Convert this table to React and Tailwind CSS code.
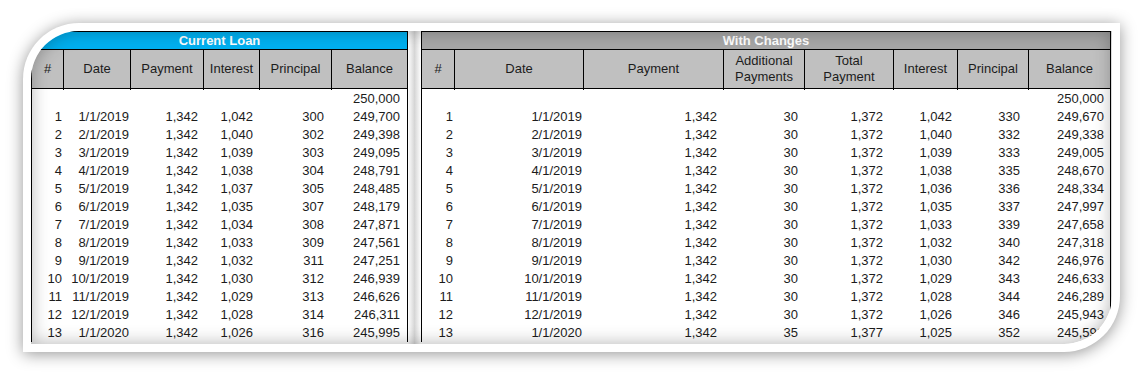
const current = [
  ['1', '1/1/2019', '1,342', '1,042', '300', '249,700'],
  ['2', '2/1/2019', '1,342', '1,040', '302', '249,398'],
  ['3', '3/1/2019', '1,342', '1,039', '303', '249,095'],
  ['4', '4/1/2019', '1,342', '1,038', '304', '248,791'],
  ['5', '5/1/2019', '1,342', '1,037', '305', '248,485'],
  ['6', '6/1/2019', '1,342', '1,035', '307', '248,179'],
  ['7', '7/1/2019', '1,342', '1,034', '308', '247,871'],
  ['8', '8/1/2019', '1,342', '1,033', '309', '247,561'],
  ['9', '9/1/2019', '1,342', '1,032', '311', '247,251'],
  ['10', '10/1/2019', '1,342', '1,030', '312', '246,939'],
  ['11', '11/1/2019', '1,342', '1,029', '313', '246,626'],
  ['12', '12/1/2019', '1,342', '1,028', '314', '246,311'],
  ['13', '1/1/2020', '1,342', '1,026', '316', '245,995'],
];

const changed = [
  ['1', '1/1/2019', '1,342', '30', '1,372', '1,042', '330', '249,670'],
  ['2', '2/1/2019', '1,342', '30', '1,372', '1,040', '332', '249,338'],
  ['3', '3/1/2019', '1,342', '30', '1,372', '1,039', '333', '249,005'],
  ['4', '4/1/2019', '1,342', '30', '1,372', '1,038', '335', '248,670'],
  ['5', '5/1/2019', '1,342', '30', '1,372', '1,036', '336', '248,334'],
  ['6', '6/1/2019', '1,342', '30', '1,372', '1,035', '337', '247,997'],
  ['7', '7/1/2019', '1,342', '30', '1,372', '1,033', '339', '247,658'],
  ['8', '8/1/2019', '1,342', '30', '1,372', '1,032', '340', '247,318'],
  ['9', '9/1/2019', '1,342', '30', '1,372', '1,030', '342', '246,976'],
  ['10', '10/1/2019', '1,342', '30', '1,372', '1,029', '343', '246,633'],
  ['11', '11/1/2019', '1,342', '30', '1,372', '1,028', '344', '246,289'],
  ['12', '12/1/2019', '1,342', '30', '1,372', '1,026', '346', '245,943'],
  ['13', '1/1/2020', '1,342', '35', '1,377', '1,025', '352', '245,591'],
];

// right padding of each column so numbers sit like the sheet's formats
const leftPad = ['pr-[2px]', 'pr-[2px]', 'pr-[6px]', 'pr-[7px]', 'pr-[8px]', 'pr-[7px]'];
const rightPad = ['pr-[2px]', 'pr-[2px]', 'pr-[7px]', 'pr-[7px]', 'pr-[11px]', 'pr-[6px]', 'pr-[9px]', 'pr-[6px]'];

const HeadCell = ({ children, last }) => (
  <div
    className={`flex items-center justify-center text-center leading-[16px] bg-[#c0c0c0] ${
      last ? '' : 'border-r border-black'
    }`}
  >
    {children}
  </div>
);

const SheetTable = ({ title, titleBg, cols, heads, rows, pads, opening }) => (
  <div className="flex flex-col border-x border-black">
    <div
      className={`h-[19px] border-y border-black ${titleBg} flex items-center justify-center text-white font-bold leading-none`}
    >
      {title}
    </div>
    <div className={`grid ${cols} h-[39px] border-b border-black`}>
      {heads.map((h, i) => (
        <HeadCell key={i} last={i === heads.length - 1}>
          {h}
        </HeadCell>
      ))}
    </div>
    {/* short gridline stubs under the header */}
    <div className={`grid ${cols} h-[2px] bg-white`}>
      {heads.map((_, i) => (
        <div key={i} className={i === heads.length - 1 ? '' : 'border-r border-black'} />
      ))}
    </div>
    <div className="bg-white -mt-[1px]">
      <div className={`grid ${cols} h-[18px] leading-[18px]`}>
        {heads.map((_, i) => (
          <div key={i} className={`text-right ${pads[i]}`}>
            {i === heads.length - 1 ? opening : ''}
          </div>
        ))}
      </div>
      {rows.map((row, r) => (
        <div key={r} className={`grid ${cols} h-[18px] leading-[18px]`}>
          {row.map((cell, i) => (
            <div key={i} className={`text-right whitespace-nowrap ${pads[i]}`}>
              {cell}
            </div>
          ))}
        </div>
      ))}
    </div>
  </div>
);

export default function App() {
  return (
    <div className="w-[1142px] h-[375px] bg-white pt-[23px] pl-[23px] font-['Liberation_Sans',Arial,sans-serif] text-[13px] text-[#1c1c1c]">
      {/* picture frame: white mat with diagonal rounded corners */}
      <div className="w-[1097px] h-[329px] bg-white p-[8px] rounded-tl-[56px] rounded-br-[56px] shadow-[0_2px_16px_rgba(0,0,0,0.42)]">
        <div className="relative w-full h-full overflow-hidden rounded-tl-[48px] rounded-br-[48px] bg-white flex">
          <div className="w-[377px] shrink-0">
            <SheetTable
              title="Current Loan"
              titleBg="bg-[#00b0f0]"
              cols="grid-cols-[32px_67px_73px_56px_72px_75px]"
              heads={['#', 'Date', 'Payment', 'Interest', 'Principal', 'Balance']}
              rows={current}
              pads={leftPad}
              opening="250,000"
            />
          </div>
          <div className="w-[13px] shrink-0 bg-linear-to-r from-white via-[#d6d6d6] to-white" />
          <div className="w-[690px] shrink-0">
            <SheetTable
              title="With Changes"
              titleBg="bg-[#a6a6a6]"
              cols="grid-cols-[33px_129px_140px_81px_89px_64px_71px_81px]"
              heads={[
                '#',
                'Date',
                'Payment',
                <span>Additional<br />Payments</span>,
                <span>Total<br />Payment</span>,
                'Interest',
                'Principal',
                'Balance',
              ]}
              rows={changed}
              pads={rightPad}
              opening="250,000"
            />
          </div>
          {/* soft edge shading over the sheet */}
          <div className="pointer-events-none absolute inset-0 rounded-tl-[48px] rounded-br-[48px] shadow-[inset_0_0_18px_rgba(0,0,0,0.3)]" />
        </div>
      </div>
    </div>
  );
}
